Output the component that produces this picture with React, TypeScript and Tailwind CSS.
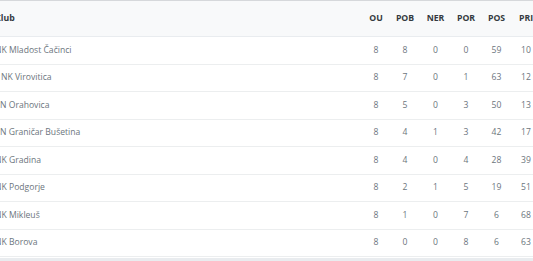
import React from "react";

type Row = { name: string; off: string; v: (string | number)[] };

const rows: Row[] = [
  { name: "NK Mladost Čačinci", off: "ml-[-5px]", v: [8, 8, 0, 0, 59, 10] },
  { name: "NK Virovitica", off: "ml-[1px]", v: [8, 7, 0, 1, 63, 12] },
  { name: "N Orahovica", off: "ml-0", v: [8, 5, 0, 3, 50, 13] },
  { name: "N Graničar Bušetina", off: "ml-0", v: [8, 4, 1, 3, 42, 17] },
  { name: "NK Gradina", off: "ml-[-5px]", v: [8, 4, 0, 4, 28, 39] },
  { name: "NK Podgorje", off: "ml-[-5px]", v: [8, 2, 1, 5, 19, 51] },
  { name: "NK Mikleuš", off: "ml-[-5px]", v: [8, 1, 0, 7, 6, 68] },
  { name: "NK Borova", off: "ml-[-5px]", v: [8, 0, 0, 8, 6, 63] },
];

const heads = ["OU", "POB", "NER", "POR", "POS", "PRI"];
const widths = ["w-[28px]", "w-[30px]", "w-[31px]", "w-[30px]", "w-[31px]", "w-[28px]"];

export default function App() {
  return (
    <div
      className="w-[533px] h-[261px] overflow-hidden bg-white flex flex-col"
      style={{ fontFamily: '"Open Sans", "Noto Sans", sans-serif' }}
    >
      <div className="w-[540px] shrink-0 border-t border-[#d6d8db]">
        <div className="flex h-[36px] items-center bg-[#f8f9fa] border-b border-[#e9ecef] text-[8.7px] font-bold text-[#343a40]">
          <div className="w-[362px] shrink-0 overflow-hidden whitespace-nowrap">
            <span className="inline-block ml-[-5px]">Klub</span>
          </div>
          {heads.map((h, i) => (
            <div key={h} className={`${widths[i]} shrink-0 text-center whitespace-nowrap`}>
              {h}
            </div>
          ))}
        </div>
        {rows.map((r) => (
          <div
            key={r.name}
            className="flex h-[27.5px] items-center border-b border-[#eceeef] text-[8.6px] text-[#6c757d]"
          >
            <div className="w-[362px] shrink-0 overflow-hidden whitespace-nowrap">
              <span className={`inline-block ${r.off}`}>{r.name}</span>
            </div>
            {r.v.map((n, i) => (
              <div key={i} className={`${widths[i]} shrink-0 text-center`}>
                {n}
              </div>
            ))}
          </div>
        ))}
      </div>
      <div className="flex-1 mt-[1px] bg-[#e9ecef]" />
    </div>
  );
}
